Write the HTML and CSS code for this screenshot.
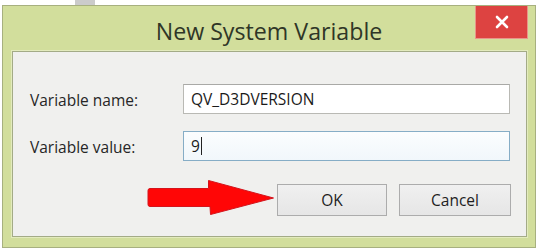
FILE: index.html
```html
<!DOCTYPE html>
<html>
<head>
<meta charset="utf-8">
<title>New System Variable</title>
<link rel="stylesheet" href="styles.css">
</head>
<body>
<div class="behind"><div class="behind-tab"></div></div>
<div class="dialog">
  <div class="titlebar">
    <div class="title">New System Variable</div>
    <button class="close" aria-label="Close">
      <svg width="14" height="14" viewBox="0 0 14 14"><path d="M2 2 L12 12 M12 2 L2 12" stroke="#fff" stroke-width="2.6" stroke-linecap="round"/></svg>
    </button>
  </div>
  <div class="content">
    <div class="form">
      <label class="label">Variable name:</label>
      <div class="field">QV_D3DVERSION</div>
      <label class="label">Variable value:</label>
      <div class="field focused">9<span class="caret"></span></div>
    </div>
    <div class="buttons">
      <button class="btn ok">OK</button>
      <button class="btn cancel">Cancel</button>
    </div>
    <svg class="arrow" width="130" height="40" viewBox="0 0 130 40">
      <path d="M3 10.5 L61.5 10.5 L61.5 2.5 L126.5 20 L63.5 36.5 L63 28.5 L3 28.5 Q1 28.5 1 26.5 L1 12.5 Q1 10.5 3 10.5 Z" fill="#ff0606" stroke="#d4141c" stroke-width="1" stroke-linejoin="round"/>
    </svg>
  </div>
</div>
</body>
</html>
```
FILE: styles.css
```css
html, body {
  margin: 0;
  padding: 0;
  background: #ffffff;
}
body {
  width: 540px;
  height: 249px;
  overflow: hidden;
  font-family: "Open Sans", "Noto Sans", "Liberation Sans", sans-serif;
}
.behind {
  height: 5px;
  padding-left: 75px;
}
.behind-tab {
  width: 20px;
  height: 5px;
  background: #cbcbcb;
}
.dialog {
  margin-left: 2px;
  width: 532px;
  height: 241px;
  border: 1px solid #a7b07f;
  background: #d2de9c;
  display: flex;
  flex-direction: column;
}
.titlebar {
  height: 45px;
  display: grid;
  grid-template-columns: 1fr auto 1fr;
  align-items: start;
}
.title {
  grid-column: 2;
  margin-top: 9px;
  font-size: 23.2px;
  color: #2f3627;
}
.close {
  grid-column: 3;
  justify-self: end;
  margin-right: 7px;
  width: 53px;
  height: 33px;
  border: 1px solid #e9958a;
  border-top: none;
  background: #dd4341;
  padding: 0;
  display: flex;
  align-items: center;
  justify-content: center;
}
.content {
  position: relative;
  margin: 0 8px 0 9px;
  border: 1px solid #a3ab86;
  background: #f0f0ee;
  box-shadow: 0 0 0 1px #e3ebbd;
  padding: 32px 15px 0 17px;
  box-sizing: border-box;
  height: 186px;
  font-size: 15.5px;
  color: #262626;
}
.form {
  display: grid;
  grid-template-columns: 153px 327px;
  row-gap: 17px;
  align-items: center;
}
.label {
  padding-top: 1px;
}
.field {
  height: 30px;
  box-sizing: border-box;
  border: 1px solid #b9b9b4;
  border-top-color: #a9a9a6;
  background: #ffffff;
  padding-left: 7px;
  display: flex;
  align-items: center;
  font-size: 15.5px;
  color: #1a1a1a;
}
.field.focused {
  border-color: #86adc6;
  background: linear-gradient(to bottom, #fbfdfe, #f1f7fb);
}
.caret {
  display: inline-block;
  width: 1px;
  height: 18px;
  margin-left: 1px;
  background: #222;
}
.buttons {
  display: flex;
  justify-content: flex-end;
  gap: 12px;
  margin-top: 23px;
}
.btn {
  height: 32px;
  box-sizing: border-box;
  border: 1px solid #acacac;
  background: linear-gradient(to bottom, #f0f0f0, #e6e6e6);
  font-family: "Open Sans", "Noto Sans", "Liberation Sans", sans-serif;
  font-size: 15.5px;
  color: #1e1e1e;
  padding: 0;
}
.ok { width: 110px; }
.cancel { width: 112px; }
.arrow {
  position: absolute;
  left: 134px;
  top: 126px;
}
```
